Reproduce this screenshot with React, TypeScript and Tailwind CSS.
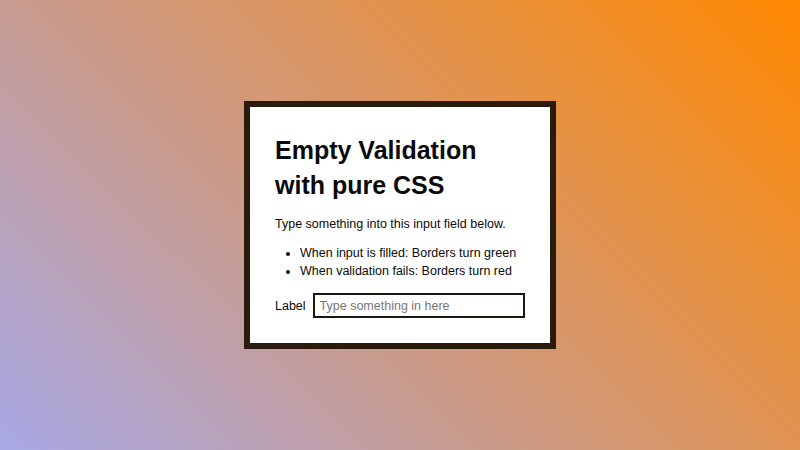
export default function App() {
  return (
    <div className="w-[800px] h-[450px] flex items-center justify-center bg-[linear-gradient(45deg,#a8a8e6,#ff8800)] font-['Liberation_Sans',Arial,sans-serif] text-[12.5px] leading-[1.4] text-[#0a0a0a]">
      <div className="w-[312px] border-[6px] border-[#2a1b0d] bg-white px-[25px] pt-[26px] pb-[25px]">
        <h1 className="text-[25px] font-bold leading-[35px] mb-[13px]">
          Empty Validation with pure CSS
        </h1>
        <p className="mb-[12px]">Type something into this input field below.</p>
        <ul className="list-disc pl-[25px] mb-[13px]">
          <li>When input is filled: Borders turn green</li>
          <li>When validation fails: Borders turn red</li>
        </ul>
        <div className="flex items-center gap-[7px]">
          <label htmlFor="field" className="pt-[2px]">Label</label>
          <input
            id="field"
            required
            placeholder="Type something in here"
            className="flex-1 min-w-0 h-[25px] border-2 border-[#1d1710] px-[5px] text-[12.5px] placeholder:text-[#777] outline-none"
          />
        </div>
      </div>
    </div>
  );
}
